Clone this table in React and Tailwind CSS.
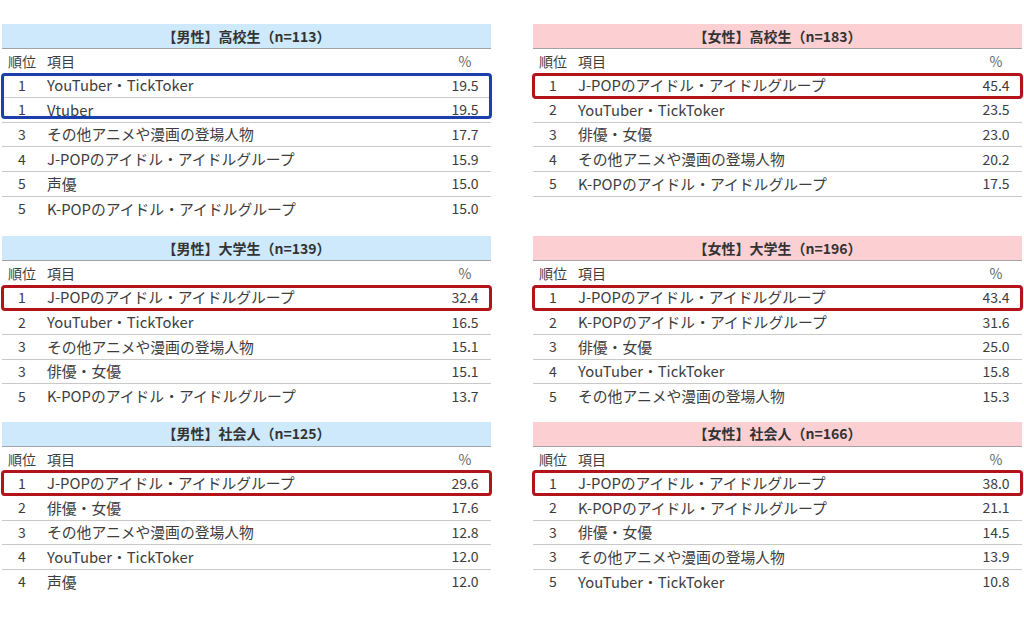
import React from 'react';

const sections = [
  [
    {
      title: '【男性】高校生（n=113）',
      tone: 'male',
      box: { color: 'blue', rows: 2 },
      rows: [
        ['1', 'YouTuber・TickToker', '19.5'],
        ['1', 'Vtuber', '19.5'],
        ['3', 'その他アニメや漫画の登場人物', '17.7'],
        ['4', 'J-POPのアイドル・アイドルグループ', '15.9'],
        ['5', '声優', '15.0'],
        ['5', 'K-POPのアイドル・アイドルグループ', '15.0'],
      ],
    },
    {
      title: '【女性】高校生（n=183）',
      tone: 'female',
      box: { color: 'red', rows: 1 },
      rows: [
        ['1', 'J-POPのアイドル・アイドルグループ', '45.4'],
        ['2', 'YouTuber・TickToker', '23.5'],
        ['3', '俳優・女優', '23.0'],
        ['4', 'その他アニメや漫画の登場人物', '20.2'],
        ['5', 'K-POPのアイドル・アイドルグループ', '17.5'],
        ['', '', ''],
      ],
    },
  ],
  [
    {
      title: '【男性】大学生（n=139）',
      tone: 'male',
      box: { color: 'red', rows: 1 },
      rows: [
        ['1', 'J-POPのアイドル・アイドルグループ', '32.4'],
        ['2', 'YouTuber・TickToker', '16.5'],
        ['3', 'その他アニメや漫画の登場人物', '15.1'],
        ['3', '俳優・女優', '15.1'],
        ['5', 'K-POPのアイドル・アイドルグループ', '13.7'],
      ],
    },
    {
      title: '【女性】大学生（n=196）',
      tone: 'female',
      box: { color: 'red', rows: 1 },
      rows: [
        ['1', 'J-POPのアイドル・アイドルグループ', '43.4'],
        ['2', 'K-POPのアイドル・アイドルグループ', '31.6'],
        ['3', '俳優・女優', '25.0'],
        ['4', 'YouTuber・TickToker', '15.8'],
        ['5', 'その他アニメや漫画の登場人物', '15.3'],
      ],
    },
  ],
  [
    {
      title: '【男性】社会人（n=125）',
      tone: 'male',
      box: { color: 'red', rows: 1 },
      rows: [
        ['1', 'J-POPのアイドル・アイドルグループ', '29.6'],
        ['2', '俳優・女優', '17.6'],
        ['3', 'その他アニメや漫画の登場人物', '12.8'],
        ['4', 'YouTuber・TickToker', '12.0'],
        ['4', '声優', '12.0'],
      ],
    },
    {
      title: '【女性】社会人（n=166）',
      tone: 'female',
      box: { color: 'red', rows: 1 },
      rows: [
        ['1', 'J-POPのアイドル・アイドルグループ', '38.0'],
        ['2', 'K-POPのアイドル・アイドルグループ', '21.1'],
        ['3', '俳優・女優', '14.5'],
        ['3', 'その他アニメや漫画の登場人物', '13.9'],
        ['5', 'YouTuber・TickToker', '10.8'],
      ],
    },
  ],
];

function Row({ rank, item, pct, last }) {
  return (
    <div
      className={`flex items-center h-[24.6px] text-[14px] text-[#3d3d3d] ${
        last ? '' : 'border-b border-[#c9c9c9]'
      }`}
    >
      <span className="w-[28px] ml-[6px] text-center">{rank}</span>
      <span className="ml-[11px] flex-1 whitespace-nowrap text-[14.8px]">{item}</span>
      <span className="w-[40px] mr-[6px] text-center">{pct}</span>
    </div>
  );
}

function RankTable({ section }) {
  const { title, tone, box, rows } = section;
  const boxColor = box.color === 'blue' ? 'border-[#1d3fae]' : 'border-[#b3141c]';
  const boxHeight = box.rows === 2 ? 'h-[46px]' : 'h-[26px]';
  return (
    <div className="w-[489px]">
      <div
        className={`h-[25px] flex items-center justify-center border-b border-[#a3a3a3] text-[14px] font-bold text-[#333] ${
          tone === 'male' ? 'bg-[#cde9fb]' : 'bg-[#fccfd3]'
        }`}
      >
        {title}
      </div>
      <div className="flex items-center h-[24.6px] text-[14px] text-[#3d3d3d]">
        <span className="w-[28px] ml-[6px] text-center">順位</span>
        <span className="ml-[11px] flex-1">項目</span>
        <span className="w-[40px] mr-[6px] text-center text-[#666]">%</span>
      </div>
      <div className="relative">
        {rows.map((r, i) => (
          <Row key={i} rank={r[0]} item={r[1]} pct={r[2]} last={i === rows.length - 1} />
        ))}
        <div
          className={`absolute left-[-1px] right-[-1px] top-[-1px] ${boxHeight} border-[3px] ${boxColor} rounded-[4px] pointer-events-none`}
        />
      </div>
    </div>
  );
}

export default function App() {
  return (
    <div
      className="w-[1024px] h-[619px] bg-white pt-[24px] pl-[2px]"
      style={{ fontFamily: '"Noto Sans CJK JP", "Noto Sans", sans-serif' }}
    >
      <div className="flex flex-col">
        {sections.map((pair, i) => (
          <div
            key={i}
            className={`flex items-start gap-[42px] ${i === 1 ? 'mt-[15px]' : ''} ${i === 2 ? 'mt-[13px]' : ''}`}
          >
            {pair.map((s, j) => (
              <RankTable key={j} section={s} />
            ))}
          </div>
        ))}
      </div>
    </div>
  );
}
